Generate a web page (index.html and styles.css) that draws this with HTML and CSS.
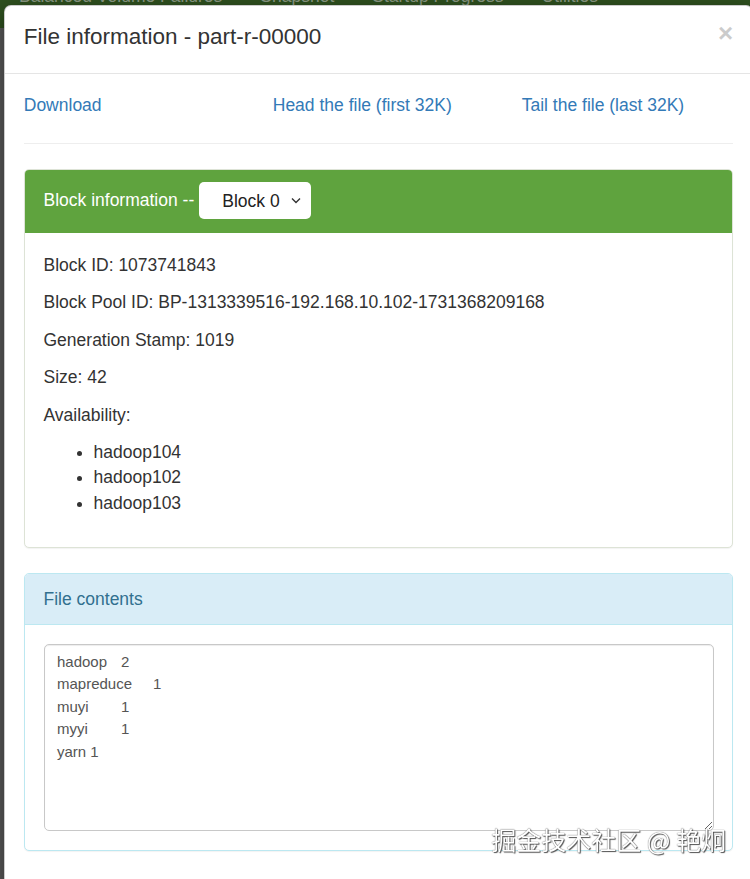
FILE: index.html
```html
<!DOCTYPE html>
<html lang="en">
<head>
	<meta charset="UTF-8">
	<title>Browsing HDFS</title>
	<link rel="stylesheet" href="styles.css">
</head>
<body>
	<div class="navbar">
		<ul class="nav">
			<li>Balanced Volume Failures</li>
			<li>Snapshot</li>
			<li>Startup Progress</li>
			<li>Utilities</li>
		</ul>
	</div>

	<div class="modal">
	<div class="modal-content">
		<div class="modal-header">
			<button type="button" class="close">&times;</button>
			<h4 class="modal-title">File information - part-r-00000</h4>
		</div>
		<div class="modal-body">
			<div class="row">
				<div class="col"><a href="#download">Download</a></div>
				<div class="col"><a href="#head">Head the file (first 32K)</a></div>
				<div class="col"><a href="#tail">Tail the file (last 32K)</a></div>
			</div>
			<hr>
			<div class="panel panel-success">
				<div class="panel-heading block-heading">
					<span>Block information --</span>
					<span class="select-box">
						<select id="block-select">
							<option>Block 0</option>
						</select>
						<svg class="caret" width="10" height="7" viewBox="0 0 10 7"><path d="M1 1.5 L5 5.5 L9 1.5" fill="none" stroke="#333" stroke-width="1.4"/></svg>
					</span>
				</div>
				<div class="panel-body block-info">
					<p>Block ID: 1073741843</p>
					<p>Block Pool ID: BP-1313339516-192.168.10.102-1731368209168</p>
					<p>Generation Stamp: 1019</p>
					<p>Size: 42</p>
					<p>Availability:</p>
					<ul>
						<li>hadoop104</li>
						<li>hadoop102</li>
						<li>hadoop103</li>
					</ul>
				</div>
			</div>
			<div class="panel panel-info">
				<div class="panel-heading">File contents</div>
				<div class="panel-body">
					<textarea class="file-contents" readonly>hadoop&#9;2
mapreduce&#9;1
muyi&#9;1
myyi&#9;1
yarn 1</textarea>
				</div>
			</div>
		</div>
	</div>
	</div>

	<div class="watermark">掘金技术社区 @ 艳炯</div>
</body>
</html>
```

FILE: styles.css
```css
html, body{
	margin: 0;
	padding: 0;
	height: 100%;
	overflow: hidden;
}
body{
	background: #5b5b5b;
	font-family: "Liberation Sans", Arial, sans-serif;
	font-size: 17.5px;
	line-height: 1.42857;
	color: #333;
}

/* page behind the backdrop */
.navbar{
	height: 28px;
	background: #2f511f;
	overflow: hidden;
}
.nav{
	display: flex;
	margin: -16px 0 0;
	padding: 0;
	list-style: none;
}
.nav li{
	padding: 0 19px;
	color: #8c9a86;
	line-height: 25px;
}

/* dialog */
.modal{
	position: absolute;
	top: 5px;
	left: 4px;
	width: 749px;
}
.modal-content{
	background: #fff;
	border: 1px solid rgba(0,0,0,.2);
	border-radius: 7px;
	box-shadow: 0 6px 19px rgba(0,0,0,.5);
}
.modal-header{
	padding: 15px 18.75px 20px;
	border-bottom: 1px solid #e5e5e5;
}
.modal-title{
	margin: 0;
	font-size: 22.5px;
	font-weight: normal;
	line-height: 32px;
}
.close{
	float: right;
	margin-top: -1px;
	padding: 0;
	border: 0;
	background: none;
	font-family: "Liberation Sans", Arial, sans-serif;
	font-size: 26px;
	font-weight: bold;
	line-height: 1;
	color: #000;
	opacity: .2;
	text-shadow: 0 1px 0 #fff;
}
.modal-body{
	padding: 18.75px;
}
.row{
	display: flex;
	margin: 0 -18.75px;
}
.col{
	flex: 1;
	padding: 0 18.75px;
}
a{
	color: #337ab7;
	text-decoration: none;
}
hr{
	margin: 25px 0;
	border: 0;
	border-top: 1px solid #eee;
}

/* panels */
.panel{
	margin-bottom: 25px;
	border: 1px solid #dde3d6;
	border-radius: 5px;
	box-shadow: 0 1px 1px rgba(0,0,0,.05);
	background: #fff;
}
.panel-heading{
	padding: 12.5px 18.75px;
	border-bottom: 1px solid transparent;
	border-radius: 4px 4px 0 0;
}
.panel-body{
	padding: 18.75px;
}
.panel-body p{
	margin: 0 0 12.5px;
}
.panel-body ul{
	margin: 0 0 12.5px;
	padding-left: 50px;
}
.panel-body li{
	line-height: 25.25px;
}
.block-info{
	padding-top: 20px;
}
.panel-success{
	border-color: #dde3d6;
}
.panel-success > .panel-heading{
	background: #5fa33e;
	border-color: #5fa33e;
	color: #fff;
}
.panel-info{
	border-color: #bce8f1;
}
.panel-info > .panel-heading{
	background: #d9edf7;
	border-color: #bce8f1;
	color: #31708f;
}

/* block chooser */
.block-heading{
	display: flex;
	align-items: center;
	gap: 5px;
}
.select-box{
	position: relative;
	display: block;
}
.select-box select{
	display: block;
	width: 112px;
	height: 37px;
	padding: 0 30px 0 23px;
	border: 0;
	border-radius: 5px;
	background: #fff;
	font-family: "Liberation Sans", Arial, sans-serif;
	font-size: 17.5px;
	color: #222;
	appearance: none;
	-webkit-appearance: none;
}
.caret{
	position: absolute;
	top: 15px;
	right: 10px;
	pointer-events: none;
}

.file-contents{
	display: block;
	box-sizing: border-box;
	width: 100%;
	height: 187px;
	padding: 6px 12.5px;
	border: 1px solid #c8c8c8;
	border-radius: 5px;
	box-shadow: inset 0 1px 1px rgba(0,0,0,.075);
	font-family: "Liberation Sans", Arial, sans-serif;
	font-size: 15px;
	line-height: 22.5px;
	color: #555;
	tab-size: 32px;
}

.watermark{
	position: fixed;
	right: 24px;
	bottom: 27px;
	font-family: "Noto Sans CJK SC", sans-serif;
	font-size: 25px;
	line-height: 26px;
	color: #fff;
	text-shadow: 0 0 1px #333, 1px 1px 1px #555;
}
```
